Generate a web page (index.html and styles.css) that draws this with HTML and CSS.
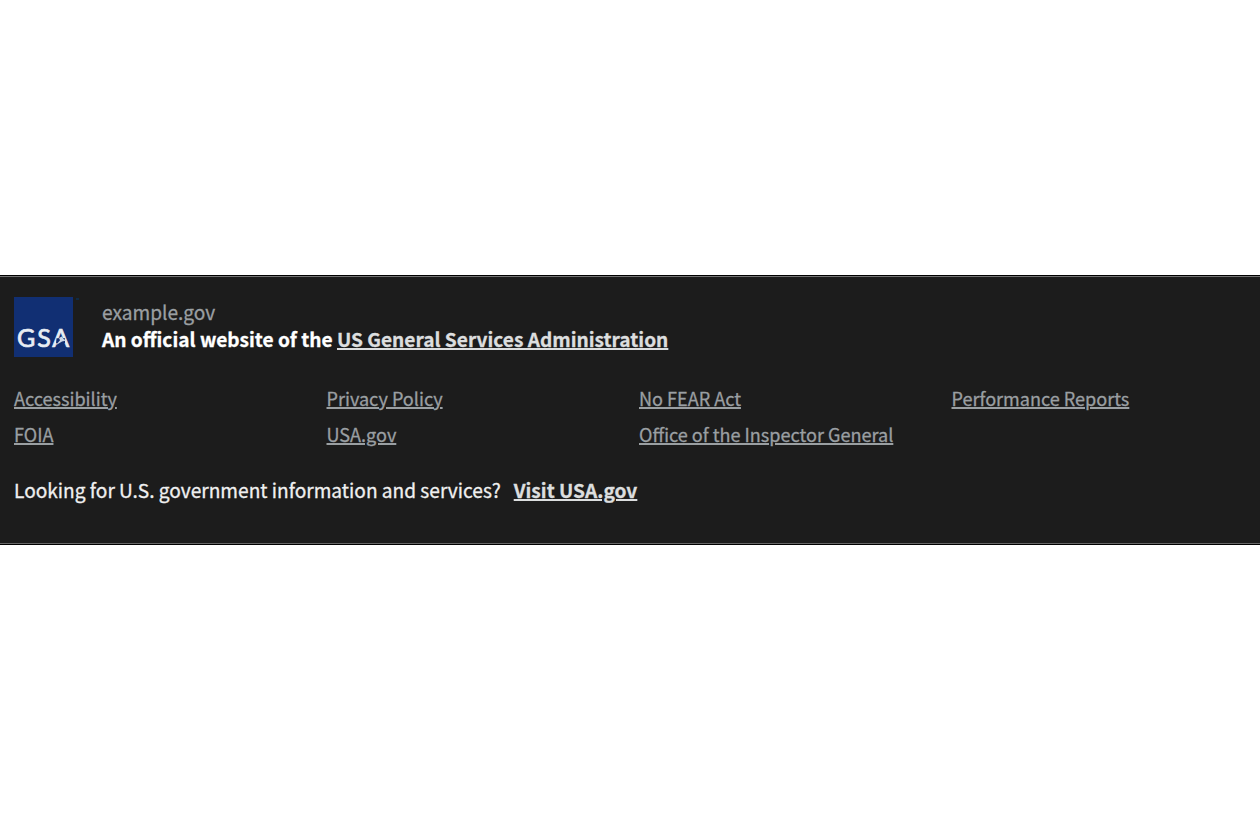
FILE: index.html
```html
<!DOCTYPE html>
<html lang="en">
<head>
<meta charset="utf-8">
<title>example.gov</title>
<link rel="stylesheet" href="styles.css">
</head>
<body>
<footer class="identifier">
  <section class="masthead">
    <svg class="logo" viewBox="0 0 64 60" aria-label="GSA">
      <rect width="59" height="60" fill="#112f73"/>
      <rect x="62" y="1" width="3" height="2" fill="#102a43"/>
      <text class="logo-text" y="49.500" x="3 23.200 38.200">GSA</text>
      <path d="M42.500 41.300H51V46H42Z" fill="#112f73"/>
      <path d="M41.500 48.500 46 43.300 45 41 47.800 39.500 49.500 42 52.500 43.500 48 44.500Z" fill="#cdd7e7"/>
    </svg>
    <div class="identity">
      <p class="domain">example.gov</p>
      <p class="disclaimer">An official website of the <a href="#">US General Services Administration</a></p>
    </div>
  </section>
  <nav class="links">
    <a href="#">Accessibility</a>
    <a href="#">Privacy Policy</a>
    <a href="#">No FEAR Act</a>
    <a href="#">Performance Reports</a>
    <a href="#">FOIA</a>
    <a href="#">USA.gov</a>
    <a href="#">Office of the Inspector General</a>
  </nav>
  <section class="usagov"><span>Looking for U.S. government information and services?</span><a href="#">Visit USA.gov</a></section>
</footer>
</body>
</html>
```

FILE: styles.css
```css
* { box-sizing: border-box; }
body {
  margin: 0;
  min-height: 820px;
  display: flex;
  flex-direction: column;
  justify-content: center;
  background: #fff;
  font-family: "Noto Sans CJK SC", "Noto Sans", sans-serif;
  font-size: 19.13px;
  line-height: 26px;
  -webkit-text-stroke: .3px currentColor;
}
p { margin: 0; }
.identifier {
  height: 270px;
  padding: 20px 0 0 14px;
  border-top: 1px solid #000;
  border-bottom: 1px solid #000;
  box-shadow: inset 0 1px #747474, inset 0 -1px #666;
  background: #1c1c1c;
  color: #f0f0f0;
}
.masthead { display: flex; height: 61px; }
.logo { width: 64px; height: 60px; margin-top: .5px; overflow: visible; }
.logo-text { font: 400 25px Lato, sans-serif; fill: #e8edf4; stroke: #e8edf4; stroke-width: .7px; }
.identity { margin-left: 24px; padding-top: 3px; }
.domain { margin-bottom: 1px; color: #9a9fa2; }
.disclaimer { color: #fff; font-weight: 700; white-space: nowrap; }
a { color: #dcdedf; text-decoration: underline; text-decoration-thickness: 1.5px; text-underline-offset: 1px; }
.links {
  display: grid;
  grid-template-columns: repeat(4, 312.5px);
  row-gap: 10px;
  margin-top: 28px;
  font-size: 18.07px;
}
.links a { justify-self: start; color: #9a9fa2; white-space: nowrap; }
.usagov { display: flex; gap: 13px; margin-top: 30px; white-space: nowrap; }
.usagov a { font-weight: 700; }
```
